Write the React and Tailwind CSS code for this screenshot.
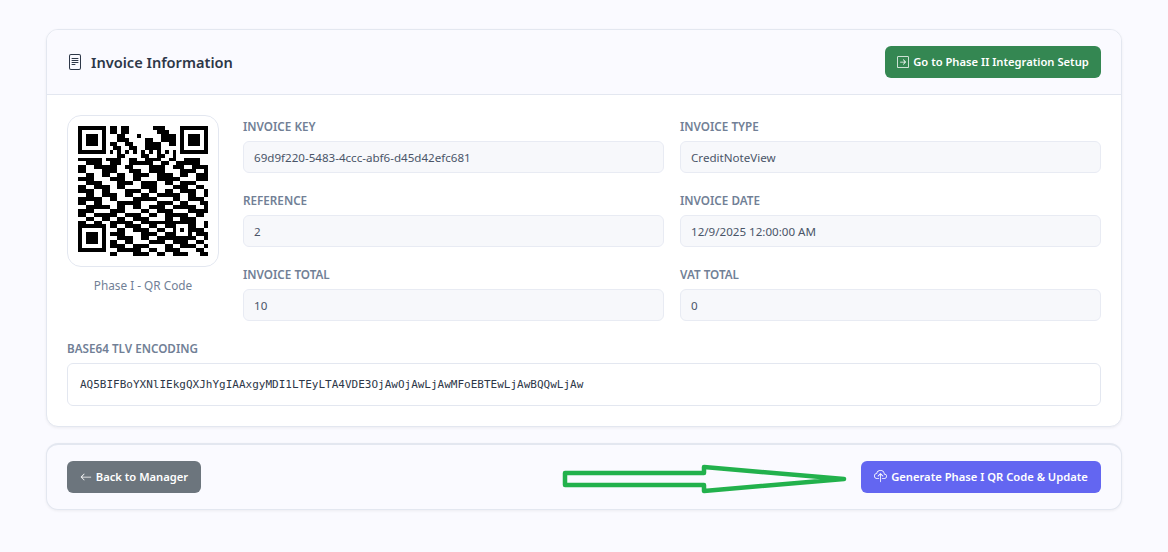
import { BsFileText, BsArrowLeft, BsCloudUpload, BsArrowRightSquare } from 'react-icons/bs';

const finder = ['1111111', '1000001', '1011101', '1011101', '1011101', '1000001', '1111111', '0000000'];

const topMid = [
  '11011000000111000',
  '11011000000011100',
  '00110001000001111',
  '00111000011001111',
  '11001100011110011',
  '01100110011110000',
  '10101010101010101',
  '00110000110011001',
];

const middle = [
  '111111011110011001111001100111100',
  '001111001110011111100110011111100',
  '110011111100110000111100111001111',
  '110000111100011100111100001111001',
  '001100110011001111001111001100111',
  '111100001111001100001111110000111',
  '001111000011110011110011001111000',
  '110011110011000011110000111100110',
  '111100110000111100110011001111001',
  '001100111100110011001111110011001',
  '111111001100001111110000110011110',
  '110011000011111100001111001100011',
  '001111110011001100111100111111001',
  '111100001111000011001111000011111',
  '110011111100111100110011111100110',
  '001100110011001111000011001111000',
  '110011001111110011111111100011001',
];

const bottomMid = [
  '1100111100110011000011001',
  '0011001111001100110011110',
  '1111000011110011000000111',
  '0011110011001111110011001',
  '1100110000111100111100110',
  '1111001111000011001111001',
  '0011111100110011110000110',
  '1100001111001100111100011',
];

const qrRows = [
  ...finder.map((f, i) => f + '0' + topMid[i] + '0' + f),
  ...middle,
  ...finder.map((f, i) => f + '0' + bottomMid[i]),
];

// alignment pattern sits at module 26,26
const isAlign = (x, y) => x >= 24 && x <= 28 && y >= 24 && y <= 28;
const alignOn = (x, y) => Math.max(Math.abs(x - 26), Math.abs(y - 26)) !== 1;

const qrPath = qrRows
  .map((row, y) =>
    row
      .split('')
      .map((c, x) => ((isAlign(x, y) ? alignOn(x, y) : c === '1') ? `M${x} ${y}h1v1h-1z` : ''))
      .join('')
  )
  .join('');

function Field({ label, value }) {
  return (
    <div>
      <div className="text-[11.7px] leading-[15px] font-semibold uppercase text-[#718096] mb-[7px]">{label}</div>
      <div className="h-[32px] flex items-center px-[10px] pt-[1px] bg-[#f7f8fb] border border-[#e8ebf3] rounded-[6px] text-[11.6px] text-[#4a5568]">
        {value}
      </div>
    </div>
  );
}

export default function App() {
  return (
    <div className="min-h-[552px] bg-[#fafaff] px-[46px] pt-[29px] font-['Noto_Sans',sans-serif]">
      {/* Invoice card */}
      <div className="bg-white border border-[#e3e7f0] rounded-[12px] shadow-[0_1px_3px_rgba(0,0,0,0.06)] overflow-hidden">
        <div className="h-[65px] flex items-center justify-between px-[20px] bg-[#fafaff] border-b border-[#e3e7f0]">
          <div className="flex items-center gap-[8px] text-[#2d3748]">
            <BsFileText size={16} />
            <span className="pt-[1px] text-[14.6px] font-semibold">Invoice Information</span>
          </div>
          <button className="h-[32px] w-[216px] flex items-center justify-center gap-[4px] bg-[#348752] text-white text-[11.2px] font-semibold rounded-[6px]">
            <BsArrowRightSquare size={12} />
            <span className="pt-[1px]">Go to Phase II Integration Setup</span>
          </button>
        </div>

        <div className="px-[20px] pt-[20px] pb-[20px]">
          <div className="flex gap-[24px]">
            <div className="w-[152px] shrink-0">
              <div className="w-[152px] h-[152px] flex items-center justify-center bg-white border border-[#e3e7f0] rounded-[14px]">
                <svg width="130" height="130" viewBox="0 0 33 33" shapeRendering="crispEdges">
                  <path d={qrPath} fill="#000" />
                </svg>
              </div>
              <div className="mt-[10px] text-center text-[11.8px] text-[#718096]">Phase I - QR Code</div>
            </div>
            <div className="flex-1 grid grid-cols-2 gap-x-[16px] gap-y-[20px] mt-[4px]">
              <Field label="Invoice Key" value="69d9f220-5483-4ccc-abf6-d45d42efc681" />
              <Field label="Invoice Type" value="CreditNoteView" />
              <Field label="Reference" value="2" />
              <Field label="Invoice Date" value="12/9/2025 12:00:00 AM" />
              <Field label="Invoice Total" value="10" />
              <Field label="VAT Total" value="0" />
            </div>
          </div>
          <div className="mt-[20px]">
            <div className="text-[11.7px] leading-[15px] font-semibold uppercase text-[#718096] mb-[7px]">Base64 TLV Encoding</div>
            <div className="h-[43px] flex items-center px-[12px] pt-[1px] bg-white border border-[#e3e7f0] rounded-[6px] text-[11px] text-[#2d3748] font-['DejaVu_Sans_Mono',monospace]">
              AQ5BIFBoYXNlIEkgQXJhYgIAAxgyMDI1LTEyLTA4VDE3OjAwOjAwLjAwMFoEBTEwLjAwBQQwLjAw
            </div>
          </div>
        </div>
      </div>

      {/* Action bar */}
      <div className="relative mt-[16px] h-[67px] flex items-center justify-between px-[20px] pb-[1px] bg-[#fafaff] border border-[#e3e7f0] border-t-2 rounded-[12px] shadow-[0_1px_3px_rgba(0,0,0,0.06)]">
        <button className="h-[32px] w-[134px] flex items-center justify-center gap-[4px] bg-[#6c757d] text-white text-[11.2px] font-semibold rounded-[6px]">
          <BsArrowLeft size={12} />
          <span className="pt-[1px]">Back to Manager</span>
        </button>
        <button className="h-[32px] w-[240px] flex items-center justify-center gap-[4px] bg-[#6366f1] text-white text-[11.2px] font-semibold rounded-[6px]">
          <BsCloudUpload size={13} />
          <span className="pt-[1px]">Generate Phase I QR Code &amp; Update</span>
        </button>
        {/* hand-drawn annotation arrow */}
        <svg className="absolute left-[514px] top-[18px]" width="288" height="32" viewBox="0 0 288 32" fill="none">
          <path d="M4 10H143V4L283 16L143 28V22H4Z" stroke="#22b14c" strokeWidth="4.5" strokeLinejoin="round" />
        </svg>
      </div>
    </div>
  );
}
